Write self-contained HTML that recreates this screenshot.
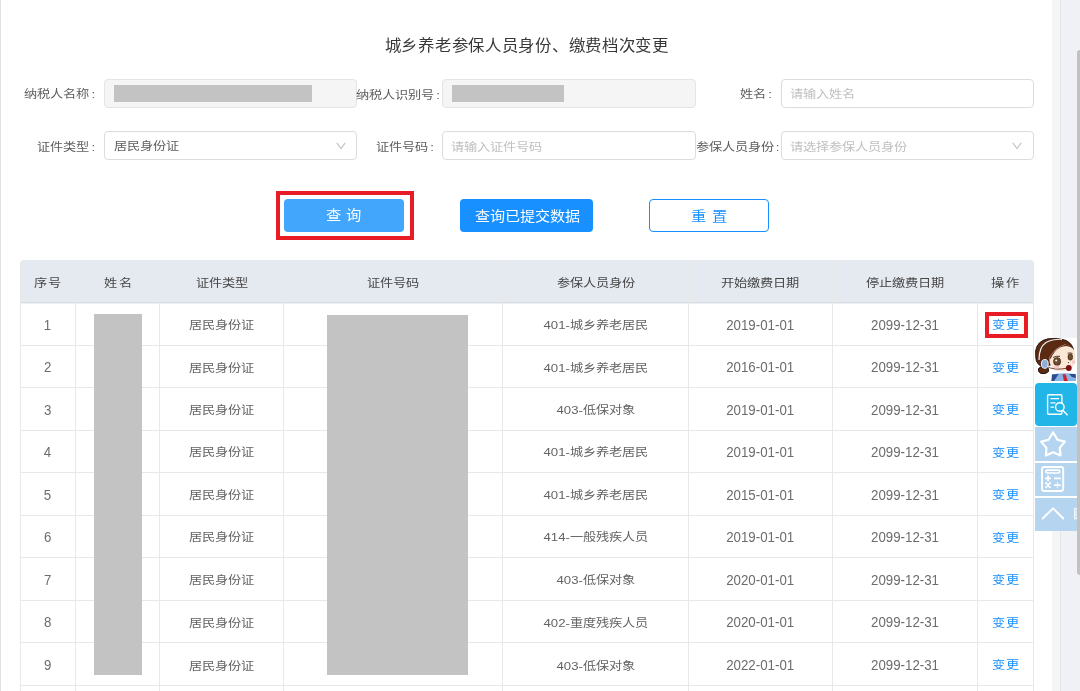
<!DOCTYPE html>
<html lang="zh-CN">
<head>
<meta charset="utf-8">
<style>
*{margin:0;padding:0;box-sizing:border-box;}
html,body{width:1080px;height:691px;overflow:hidden;background:#fff;}
body{position:relative;-webkit-font-smoothing:antialiased;will-change:transform;font-family:"Liberation Sans",sans-serif;font-size:13px;color:#606060;}
.abs{position:absolute;}
.t{position:absolute;white-space:nowrap;}
.co{margin-left:2px;}
.inp{height:29px;border:1px solid #dcdcdc;border-radius:4px;background:#fff;}
.inp.dis{background:#f5f5f5;border-color:#e4e4e4;}
.grey{background:#c3c3c3;}
.btn{height:33px;border-radius:4px;}
.redbox{border:4.5px solid #e81c24;}
.hline{height:1px;background:#e8e8e8;}
.vline{width:1px;background:#e8e8e8;}
</style>
</head>
<body>

<div class="abs" style="left:0;top:0;width:1px;height:691px;background:#dfe1e6;"></div>
<div class="abs" style="left:1052px;top:0;width:8px;height:691px;background:#f5f5f5;"></div>
<div class="abs" style="left:1060px;top:0;width:1px;height:691px;background:#e6e7eb;"></div>
<div class="abs" style="left:1061px;top:0;width:19px;height:691px;background:#f0f1f4;"></div>
<div class="abs" style="left:1077px;top:50px;width:6px;height:525px;background:#c1c1c1;border-radius:3px;"></div>
<div class="abs inp dis" style="left:104px;top:79px;width:253px;"></div>
<div class="abs grey" style="left:114px;top:85px;width:198px;height:17px;"></div>
<div class="abs inp dis" style="left:442px;top:79px;width:254px;"></div>
<div class="abs grey" style="left:452px;top:85px;width:112px;height:17px;"></div>
<div class="abs inp" style="left:781px;top:79px;width:253px;"></div>
<div class="abs inp" style="left:104px;top:131px;width:253px;"></div>
<div class="abs inp" style="left:442px;top:131px;width:254px;"></div>
<div class="abs inp" style="left:781px;top:131px;width:253px;"></div>
<svg class="abs" style="left:335.5px;top:142px;" width="10" height="8" viewBox="0 0 10 8"><path d="M0.8 0.8 L5 6.5 L9.2 0.8" fill="none" stroke="#c2c2c6" stroke-width="1.1"/></svg>
<svg class="abs" style="left:1012px;top:142px;" width="10" height="8" viewBox="0 0 10 8"><path d="M0.8 0.8 L5 6.5 L9.2 0.8" fill="none" stroke="#c2c2c6" stroke-width="1.1"/></svg>
<div class="abs redbox" style="left:276px;top:191.2px;width:137.6px;height:49.3px;border-width:4.6px;"></div>
<div class="abs btn" style="left:284px;top:199px;width:120px;background:#42a6fd;"></div>
<div class="abs btn" style="left:460px;top:199px;width:133px;background:#1890ff;"></div>
<div class="abs btn" style="left:649px;top:199px;width:120px;background:#fff;border:1px solid #1890ff;"></div>
<div class="abs" style="left:20px;top:260px;width:1014px;height:42px;background:#e5e9f0;border-radius:4px 4px 0 0;"></div>
<div class="abs hline" style="left:20px;top:302px;width:1014px;background:#d9dce2;"></div>
<div class="abs hline" style="left:20px;top:303px;width:1014px;background:#eef0f3;"></div>
<div class="abs hline" style="left:20px;top:345px;width:1014px;"></div>
<div class="abs hline" style="left:20px;top:387px;width:1014px;"></div>
<div class="abs hline" style="left:20px;top:430px;width:1014px;"></div>
<div class="abs hline" style="left:20px;top:472px;width:1014px;"></div>
<div class="abs hline" style="left:20px;top:515px;width:1014px;"></div>
<div class="abs hline" style="left:20px;top:557px;width:1014px;"></div>
<div class="abs hline" style="left:20px;top:600px;width:1014px;"></div>
<div class="abs hline" style="left:20px;top:642px;width:1014px;"></div>
<div class="abs hline" style="left:20px;top:685px;width:1014px;"></div>
<div class="abs vline" style="left:20px;top:263px;height:428px;"></div>
<div class="abs vline" style="left:75px;top:260px;height:431px;"></div>
<div class="abs vline" style="left:159px;top:260px;height:431px;"></div>
<div class="abs vline" style="left:283px;top:260px;height:431px;"></div>
<div class="abs vline" style="left:502px;top:260px;height:431px;"></div>
<div class="abs vline" style="left:688px;top:260px;height:431px;"></div>
<div class="abs vline" style="left:832px;top:260px;height:431px;"></div>
<div class="abs vline" style="left:977px;top:260px;height:431px;"></div>
<div class="abs vline" style="left:1033px;top:263px;height:428px;"></div>
<div class="abs grey" style="left:93.7px;top:313.7px;width:48.6px;height:361.3px;"></div>
<div class="abs grey" style="left:326.8px;top:315.2px;width:141.3px;height:359.8px;"></div>
<div class="abs redbox" style="left:985px;top:312px;width:43px;height:26px;border-width:4.3px;"></div>
<div class="t" id="title" style="left:326.81px;width:400px;text-align:center;top:34.57px;font-size:16.40px;line-height:21.32px;color:#383838;transform:scaleY(0.950);transform-origin:50% 10.66px;letter-spacing:0.72px;">城乡养老参保人员身份、缴费档次变更</div>
<div class="t" id="l1" style="left:-304.86px;width:400px;text-align:right;top:86.25px;font-size:13.20px;line-height:17.16px;color:#5e5e5e;transform:scaleY(0.880);transform-origin:50% 8.58px;">纳税人名称<span class="co">:</span></div>
<div class="t" id="l2" style="left:356.28px;text-align:left;top:86.50px;font-size:13.20px;line-height:17.16px;color:#5e5e5e;transform:scaleY(0.880);transform-origin:50% 8.58px;">纳税人识别号<span class="co">:</span></div>
<div class="t" id="l3" style="left:372.00px;width:400px;text-align:right;top:86.18px;font-size:13.20px;line-height:17.16px;color:#5e5e5e;transform:scaleY(0.880);transform-origin:50% 8.58px;">姓名<span class="co">:</span></div>
<div class="t" id="l4" style="left:-304.86px;width:400px;text-align:right;top:138.54px;font-size:13.20px;line-height:17.16px;color:#5e5e5e;transform:scaleY(0.880);transform-origin:50% 8.58px;">证件类型<span class="co">:</span></div>
<div class="t" id="l5" style="left:33.82px;width:400px;text-align:right;top:138.54px;font-size:13.20px;line-height:17.16px;color:#5e5e5e;transform:scaleY(0.880);transform-origin:50% 8.58px;">证件号码<span class="co">:</span></div>
<div class="t" id="l6" style="left:695.72px;text-align:left;top:138.54px;font-size:13.20px;line-height:17.16px;color:#5e5e5e;transform:scaleY(0.880);transform-origin:50% 8.58px;">参保人员身份<span class="co">:</span></div>
<div class="t" id="v1" style="left:114.00px;text-align:left;top:138.38px;font-size:13.20px;line-height:17.16px;color:#606060;transform:scaleY(0.880);transform-origin:50% 8.58px;">居民身份证</div>
<div class="t" id="p1" style="left:789.72px;text-align:left;top:86.37px;font-size:13.20px;line-height:17.16px;color:#c0c0c0;transform:scaleY(0.880);transform-origin:50% 8.58px;">请输入姓名</div>
<div class="t" id="p2" style="left:450.96px;text-align:left;top:138.71px;font-size:13.20px;line-height:17.16px;color:#c0c0c0;transform:scaleY(0.880);transform-origin:50% 8.58px;">请输入证件号码</div>
<div class="t" id="p3" style="left:789.72px;text-align:left;top:138.71px;font-size:13.20px;line-height:17.16px;color:#c0c0c0;transform:scaleY(0.880);transform-origin:50% 8.58px;">请选择参保人员身份</div>
<div class="t" id="b1" style="left:143.80px;width:400px;text-align:center;top:206.06px;font-size:15.30px;line-height:19.89px;color:#fff;transform:scaleY(0.880);transform-origin:50% 9.95px;font-weight:500;">查<span style="margin-left:5.3px"></span>询</div>
<div class="t" id="b2" style="left:327.05px;width:400px;text-align:center;top:206.68px;font-size:15.10px;line-height:19.63px;color:#fff;transform:scaleY(0.880);transform-origin:50% 9.81px;font-weight:500;">查询已提交数据</div>
<div class="t" id="b3" style="left:508.74px;width:400px;text-align:center;top:206.88px;font-size:15.30px;line-height:19.89px;color:#1890ff;transform:scaleY(0.880);transform-origin:50% 9.95px;font-weight:500;">重<span style="margin-left:5.8px"></span>置</div>
<div class="t" id="h0" style="left:-151.53px;width:400px;text-align:center;top:274.78px;font-size:13.20px;line-height:17.16px;color:#474747;transform:scaleY(0.880);transform-origin:50% 8.58px;letter-spacing:1.4px;">序号</div>
<div class="t" id="h1" style="left:-81.46px;width:400px;text-align:center;top:274.78px;font-size:13.20px;line-height:17.16px;color:#474747;transform:scaleY(0.880);transform-origin:50% 8.58px;letter-spacing:1.4px;">姓名</div>
<div class="t" id="h2" style="left:21.66px;width:400px;text-align:center;top:274.78px;font-size:13.20px;line-height:17.16px;color:#474747;transform:scaleY(0.880);transform-origin:50% 8.58px;">证件类型</div>
<div class="t" id="h3" style="left:193.38px;width:400px;text-align:center;top:274.78px;font-size:13.20px;line-height:17.16px;color:#474747;transform:scaleY(0.880);transform-origin:50% 8.58px;">证件号码</div>
<div class="t" id="h4" style="left:395.55px;width:400px;text-align:center;top:274.78px;font-size:13.20px;line-height:17.16px;color:#474747;transform:scaleY(0.880);transform-origin:50% 8.58px;">参保人员身份</div>
<div class="t" id="h5" style="left:560.00px;width:400px;text-align:center;top:274.78px;font-size:13.20px;line-height:17.16px;color:#474747;transform:scaleY(0.880);transform-origin:50% 8.58px;">开始缴费日期</div>
<div class="t" id="h6" style="left:705.00px;width:400px;text-align:center;top:274.78px;font-size:13.20px;line-height:17.16px;color:#474747;transform:scaleY(0.880);transform-origin:50% 8.58px;">停止缴费日期</div>
<div class="t" id="h7" style="left:805.80px;width:400px;text-align:center;top:274.78px;font-size:13.20px;line-height:17.16px;color:#474747;transform:scaleY(0.880);transform-origin:50% 8.58px;letter-spacing:1.4px;">操作</div>
<div class="t" id="r0c0" style="left:-152.50px;width:400px;text-align:center;top:316.95px;font-size:13.30px;line-height:17.29px;color:#6c6c6c;transform:scaleY(1.050);transform-origin:50% 8.65px;">1</div>
<div class="t" id="r0c2" style="left:21.94px;width:400px;text-align:center;top:316.82px;font-size:13.20px;line-height:17.16px;color:#646464;transform:scaleY(0.880);transform-origin:50% 8.58px;">居民身份证</div>
<div class="t" id="r0c4" style="left:395.68px;width:400px;text-align:center;top:316.82px;font-size:13.20px;line-height:17.16px;color:#646464;transform:scaleY(0.880);transform-origin:50% 8.58px;">401-城乡养老居民</div>
<div class="t" id="r0c5" style="left:560.20px;width:400px;text-align:center;top:316.95px;font-size:13.30px;line-height:17.29px;color:#6c6c6c;transform:scaleY(1.050);transform-origin:50% 8.65px;">2019-01-01</div>
<div class="t" id="r0c6" style="left:705.00px;width:400px;text-align:center;top:316.95px;font-size:13.30px;line-height:17.29px;color:#6c6c6c;transform:scaleY(1.050);transform-origin:50% 8.65px;">2099-12-31</div>
<div class="t" id="r0c7" style="left:806.03px;width:400px;text-align:center;top:317.10px;font-size:13.20px;line-height:17.16px;color:#1890ff;transform:scaleY(0.880);transform-origin:50% 8.58px;letter-spacing:1.2px;">变更</div>
<div class="t" id="r1c0" style="left:-152.40px;width:400px;text-align:center;top:359.45px;font-size:13.30px;line-height:17.29px;color:#6c6c6c;transform:scaleY(1.050);transform-origin:50% 8.65px;">2</div>
<div class="t" id="r1c2" style="left:21.94px;width:400px;text-align:center;top:359.63px;font-size:13.20px;line-height:17.16px;color:#646464;transform:scaleY(0.880);transform-origin:50% 8.58px;">居民身份证</div>
<div class="t" id="r1c4" style="left:395.68px;width:400px;text-align:center;top:359.63px;font-size:13.20px;line-height:17.16px;color:#646464;transform:scaleY(0.880);transform-origin:50% 8.58px;">401-城乡养老居民</div>
<div class="t" id="r1c5" style="left:560.20px;width:400px;text-align:center;top:359.45px;font-size:13.30px;line-height:17.29px;color:#6c6c6c;transform:scaleY(1.050);transform-origin:50% 8.65px;">2016-01-01</div>
<div class="t" id="r1c6" style="left:705.00px;width:400px;text-align:center;top:359.45px;font-size:13.30px;line-height:17.29px;color:#6c6c6c;transform:scaleY(1.050);transform-origin:50% 8.65px;">2099-12-31</div>
<div class="t" id="r1c7" style="left:806.03px;width:400px;text-align:center;top:359.95px;font-size:13.20px;line-height:17.16px;color:#1890ff;transform:scaleY(0.880);transform-origin:50% 8.58px;letter-spacing:1.2px;">变更</div>
<div class="t" id="r2c0" style="left:-152.40px;width:400px;text-align:center;top:401.77px;font-size:13.30px;line-height:17.29px;color:#6c6c6c;transform:scaleY(1.050);transform-origin:50% 8.65px;">3</div>
<div class="t" id="r2c2" style="left:21.94px;width:400px;text-align:center;top:402.16px;font-size:13.20px;line-height:17.16px;color:#646464;transform:scaleY(0.880);transform-origin:50% 8.58px;">居民身份证</div>
<div class="t" id="r2c4" style="left:395.68px;width:400px;text-align:center;top:402.16px;font-size:13.20px;line-height:17.16px;color:#646464;transform:scaleY(0.880);transform-origin:50% 8.58px;">403-低保对象</div>
<div class="t" id="r2c5" style="left:560.20px;width:400px;text-align:center;top:401.77px;font-size:13.30px;line-height:17.29px;color:#6c6c6c;transform:scaleY(1.050);transform-origin:50% 8.65px;">2019-01-01</div>
<div class="t" id="r2c6" style="left:705.00px;width:400px;text-align:center;top:401.77px;font-size:13.30px;line-height:17.29px;color:#6c6c6c;transform:scaleY(1.050);transform-origin:50% 8.65px;">2099-12-31</div>
<div class="t" id="r2c7" style="left:806.03px;width:400px;text-align:center;top:401.94px;font-size:13.20px;line-height:17.16px;color:#1890ff;transform:scaleY(0.880);transform-origin:50% 8.58px;letter-spacing:1.2px;">变更</div>
<div class="t" id="r3c0" style="left:-152.50px;width:400px;text-align:center;top:444.25px;font-size:13.30px;line-height:17.29px;color:#6c6c6c;transform:scaleY(1.050);transform-origin:50% 8.65px;">4</div>
<div class="t" id="r3c2" style="left:21.94px;width:400px;text-align:center;top:444.41px;font-size:13.20px;line-height:17.16px;color:#646464;transform:scaleY(0.880);transform-origin:50% 8.58px;">居民身份证</div>
<div class="t" id="r3c4" style="left:395.68px;width:400px;text-align:center;top:444.41px;font-size:13.20px;line-height:17.16px;color:#646464;transform:scaleY(0.880);transform-origin:50% 8.58px;">401-城乡养老居民</div>
<div class="t" id="r3c5" style="left:560.20px;width:400px;text-align:center;top:444.25px;font-size:13.30px;line-height:17.29px;color:#6c6c6c;transform:scaleY(1.050);transform-origin:50% 8.65px;">2019-01-01</div>
<div class="t" id="r3c6" style="left:705.00px;width:400px;text-align:center;top:444.25px;font-size:13.30px;line-height:17.29px;color:#6c6c6c;transform:scaleY(1.050);transform-origin:50% 8.65px;">2099-12-31</div>
<div class="t" id="r3c7" style="left:806.03px;width:400px;text-align:center;top:444.73px;font-size:13.20px;line-height:17.16px;color:#1890ff;transform:scaleY(0.880);transform-origin:50% 8.58px;letter-spacing:1.2px;">变更</div>
<div class="t" id="r4c0" style="left:-152.60px;width:400px;text-align:center;top:486.59px;font-size:13.30px;line-height:17.29px;color:#6c6c6c;transform:scaleY(1.050);transform-origin:50% 8.65px;">5</div>
<div class="t" id="r4c2" style="left:21.94px;width:400px;text-align:center;top:487.24px;font-size:13.20px;line-height:17.16px;color:#646464;transform:scaleY(0.880);transform-origin:50% 8.58px;">居民身份证</div>
<div class="t" id="r4c4" style="left:395.68px;width:400px;text-align:center;top:487.24px;font-size:13.20px;line-height:17.16px;color:#646464;transform:scaleY(0.880);transform-origin:50% 8.58px;">401-城乡养老居民</div>
<div class="t" id="r4c5" style="left:560.20px;width:400px;text-align:center;top:486.59px;font-size:13.30px;line-height:17.29px;color:#6c6c6c;transform:scaleY(1.050);transform-origin:50% 8.65px;">2015-01-01</div>
<div class="t" id="r4c6" style="left:705.00px;width:400px;text-align:center;top:486.59px;font-size:13.30px;line-height:17.29px;color:#6c6c6c;transform:scaleY(1.050);transform-origin:50% 8.65px;">2099-12-31</div>
<div class="t" id="r4c7" style="left:806.03px;width:400px;text-align:center;top:487.02px;font-size:13.20px;line-height:17.16px;color:#1890ff;transform:scaleY(0.880);transform-origin:50% 8.58px;letter-spacing:1.2px;">变更</div>
<div class="t" id="r5c0" style="left:-152.40px;width:400px;text-align:center;top:529.43px;font-size:13.30px;line-height:17.29px;color:#6c6c6c;transform:scaleY(1.050);transform-origin:50% 8.65px;">6</div>
<div class="t" id="r5c2" style="left:21.94px;width:400px;text-align:center;top:529.46px;font-size:13.20px;line-height:17.16px;color:#646464;transform:scaleY(0.880);transform-origin:50% 8.58px;">居民身份证</div>
<div class="t" id="r5c4" style="left:395.68px;width:400px;text-align:center;top:529.46px;font-size:13.20px;line-height:17.16px;color:#646464;transform:scaleY(0.880);transform-origin:50% 8.58px;">414-一般残疾人员</div>
<div class="t" id="r5c5" style="left:560.20px;width:400px;text-align:center;top:529.43px;font-size:13.30px;line-height:17.29px;color:#6c6c6c;transform:scaleY(1.050);transform-origin:50% 8.65px;">2019-01-01</div>
<div class="t" id="r5c6" style="left:705.00px;width:400px;text-align:center;top:529.43px;font-size:13.30px;line-height:17.29px;color:#6c6c6c;transform:scaleY(1.050);transform-origin:50% 8.65px;">2099-12-31</div>
<div class="t" id="r5c7" style="left:806.03px;width:400px;text-align:center;top:529.57px;font-size:13.20px;line-height:17.16px;color:#1890ff;transform:scaleY(0.880);transform-origin:50% 8.58px;letter-spacing:1.2px;">变更</div>
<div class="t" id="r6c0" style="left:-152.40px;width:400px;text-align:center;top:572.41px;font-size:13.30px;line-height:17.29px;color:#6c6c6c;transform:scaleY(1.050);transform-origin:50% 8.65px;">7</div>
<div class="t" id="r6c2" style="left:21.94px;width:400px;text-align:center;top:571.76px;font-size:13.20px;line-height:17.16px;color:#646464;transform:scaleY(0.880);transform-origin:50% 8.58px;">居民身份证</div>
<div class="t" id="r6c4" style="left:395.68px;width:400px;text-align:center;top:571.76px;font-size:13.20px;line-height:17.16px;color:#646464;transform:scaleY(0.880);transform-origin:50% 8.58px;">403-低保对象</div>
<div class="t" id="r6c5" style="left:560.20px;width:400px;text-align:center;top:572.41px;font-size:13.30px;line-height:17.29px;color:#6c6c6c;transform:scaleY(1.050);transform-origin:50% 8.65px;">2020-01-01</div>
<div class="t" id="r6c6" style="left:705.00px;width:400px;text-align:center;top:572.41px;font-size:13.30px;line-height:17.29px;color:#6c6c6c;transform:scaleY(1.050);transform-origin:50% 8.65px;">2099-12-31</div>
<div class="t" id="r6c7" style="left:806.03px;width:400px;text-align:center;top:572.34px;font-size:13.20px;line-height:17.16px;color:#1890ff;transform:scaleY(0.880);transform-origin:50% 8.58px;letter-spacing:1.2px;">变更</div>
<div class="t" id="r7c0" style="left:-152.40px;width:400px;text-align:center;top:614.39px;font-size:13.30px;line-height:17.29px;color:#6c6c6c;transform:scaleY(1.050);transform-origin:50% 8.65px;">8</div>
<div class="t" id="r7c2" style="left:21.94px;width:400px;text-align:center;top:615.05px;font-size:13.20px;line-height:17.16px;color:#646464;transform:scaleY(0.880);transform-origin:50% 8.58px;">居民身份证</div>
<div class="t" id="r7c4" style="left:395.68px;width:400px;text-align:center;top:615.05px;font-size:13.20px;line-height:17.16px;color:#646464;transform:scaleY(0.880);transform-origin:50% 8.58px;">402-重度残疾人员</div>
<div class="t" id="r7c5" style="left:560.20px;width:400px;text-align:center;top:614.39px;font-size:13.30px;line-height:17.29px;color:#6c6c6c;transform:scaleY(1.050);transform-origin:50% 8.65px;">2020-01-01</div>
<div class="t" id="r7c6" style="left:705.00px;width:400px;text-align:center;top:614.39px;font-size:13.30px;line-height:17.29px;color:#6c6c6c;transform:scaleY(1.050);transform-origin:50% 8.65px;">2099-12-31</div>
<div class="t" id="r7c7" style="left:806.03px;width:400px;text-align:center;top:614.87px;font-size:13.20px;line-height:17.16px;color:#1890ff;transform:scaleY(0.880);transform-origin:50% 8.58px;letter-spacing:1.2px;">变更</div>
<div class="t" id="r8c0" style="left:-152.40px;width:400px;text-align:center;top:657.23px;font-size:13.30px;line-height:17.29px;color:#6c6c6c;transform:scaleY(1.050);transform-origin:50% 8.65px;">9</div>
<div class="t" id="r8c2" style="left:21.94px;width:400px;text-align:center;top:657.58px;font-size:13.20px;line-height:17.16px;color:#646464;transform:scaleY(0.880);transform-origin:50% 8.58px;">居民身份证</div>
<div class="t" id="r8c4" style="left:395.68px;width:400px;text-align:center;top:657.58px;font-size:13.20px;line-height:17.16px;color:#646464;transform:scaleY(0.880);transform-origin:50% 8.58px;">403-低保对象</div>
<div class="t" id="r8c5" style="left:560.20px;width:400px;text-align:center;top:657.23px;font-size:13.30px;line-height:17.29px;color:#6c6c6c;transform:scaleY(1.050);transform-origin:50% 8.65px;">2022-01-01</div>
<div class="t" id="r8c6" style="left:705.00px;width:400px;text-align:center;top:657.23px;font-size:13.30px;line-height:17.29px;color:#6c6c6c;transform:scaleY(1.050);transform-origin:50% 8.65px;">2099-12-31</div>
<div class="t" id="r8c7" style="left:806.03px;width:400px;text-align:center;top:657.36px;font-size:13.20px;line-height:17.16px;color:#1890ff;transform:scaleY(0.880);transform-origin:50% 8.58px;letter-spacing:1.2px;">变更</div>
<!-- floating widget -->
<div class="abs" style="left:1034px;top:338px;width:43px;height:193px;background:#fff;"></div>
<svg class="abs" style="left:1034px;top:338px;" width="43" height="44" viewBox="0 0 43 44">
  <path d="M1.6 13 Q3 3 14 0.8 Q24 -0.6 32 2.4 Q39 6 39.6 13 L39 17 Q32 28 16.5 27 Q10 28 7.5 28.5 Q2.5 26 1.8 20 Z" fill="#5a2a12" stroke="#1e0c04" stroke-width="0.9"/>
  <path d="M4.5 30.5 Q7 27.5 12 28.5 Q15.5 30 14.5 33.5 Q12 36.5 7 35.5 Q3.5 34 4.5 30.5 Z" fill="#5a2a12" stroke="#1e0c04" stroke-width="0.9"/>
  <path d="M15.5 19 Q22 9 31 6.6 Q38 8 40.5 13 Q42 18 41.5 22 Q41 29 35 32 Q28 34 21 32.5 Q16.5 29 15.6 24 Z" fill="#fbe7d6"/>
  <path d="M15.5 19.5 Q22 9.5 31 6.8 Q37 7.5 39.5 10.5 Q33 6 26 9.5 Q20 13 16.5 21 Z" fill="#5a2a12"/>
  <path d="M5 22 Q5 9 12 4.5 Q19 0.8 28 1.3" fill="none" stroke="#eef0f6" stroke-width="1.2"/>
  <path d="M12 28 Q20 33 34 30" fill="none" stroke="#4a1a10" stroke-width="0.8"/>
  <ellipse cx="10.8" cy="25.9" rx="3.4" ry="4.4" fill="#8eaed8" stroke="#f4f6fa" stroke-width="1"/>
  <path d="M19 19.5 Q22 17.8 26 18.3" fill="none" stroke="#3a2010" stroke-width="0.9"/>
  <path d="M33.5 15.3 Q36 14.3 38.5 15.5" fill="none" stroke="#3a2010" stroke-width="0.8"/>
  <ellipse cx="23.1" cy="23.5" rx="3.6" ry="3.9" fill="#6e4e2e" stroke="#2a1a0e" stroke-width="0.6"/>
  <circle cx="22.2" cy="22.4" r="1" fill="#fff"/>
  <ellipse cx="36.3" cy="19" rx="2.4" ry="3.2" fill="#6e4e2e" stroke="#2a1a0e" stroke-width="0.5"/>
  <ellipse cx="22.5" cy="29" rx="2.8" ry="1.5" fill="#f5c6c6"/>
  <ellipse cx="39.6" cy="24" rx="1.8" ry="1.8" fill="#f5c6c6"/>
  <circle cx="34.4" cy="24.6" r="0.6" fill="#3a2010"/>
  <circle cx="34.8" cy="30" r="2.9" fill="#7a0e10"/>
  <path d="M17.5 43 L18 36.5 Q29 34.5 41.5 36 L42 43 Z" fill="#86b2e4"/>
  <path d="M18 36.5 L24.5 36 L22 40 L20 43 L17.5 43 Z" fill="#2c4c8c"/>
  <path d="M35 36 L41.5 36 L42 40 L38 39 Z" fill="#2c4c8c"/>
  <path d="M28.5 36.5 L31.5 36.3 L33.8 43 L30 43 Z" fill="#d4202a"/>
</svg>
<div class="abs" style="left:1035px;top:383px;width:42px;height:42.5px;background:#22b5e8;border-radius:4px;"></div>
<svg class="abs" style="left:1035px;top:383px;" width="42" height="43" viewBox="0 0 42 43">
  <rect x="12.6" y="11.8" width="14.3" height="19.4" rx="1" fill="none" stroke="#fff" stroke-width="1.4"/>
  <path d="M15.5 15.7 H24 M15.5 19.9 H20.5 M15.5 24.2 H19" stroke="#fff" stroke-width="1.3" fill="none"/>
  <circle cx="24.8" cy="24" r="4.3" fill="#22b5e8" stroke="#fff" stroke-width="1.4"/>
  <path d="M27.8 27.2 L32.6 32.2" stroke="#fff" stroke-width="1.4" fill="none"/>
</svg>
<div class="abs" style="left:1035px;top:427px;width:42px;height:34px;background:#b4d4f0;"></div>
<svg class="abs" style="left:1035px;top:427px;" width="42" height="34" viewBox="0 0 42 34">
  <path d="M18.1 5.2 L22.4 12.7 L29.9 14.6 L24.7 20.9 L25.6 28.5 L18.1 25.3 L10.9 28.5 L11.4 20.9 L6.2 14.6 L13.6 12.7 Z" fill="none" stroke="#fff" stroke-width="2.2" stroke-linejoin="round"/>
</svg>
<div class="abs" style="left:1035px;top:463px;width:42px;height:33px;background:#b4d4f0;"></div>
<svg class="abs" style="left:1035px;top:463px;" width="42" height="33" viewBox="0 0 42 33">
  <rect x="7" y="4" width="21.2" height="24" rx="2.2" fill="none" stroke="#fff" stroke-width="1.9"/>
  <rect x="10.9" y="7.1" width="13.9" height="2.9" rx="1.45" fill="none" stroke="#fff" stroke-width="1.7"/>
  <path d="M10 15.3 H16 M13 12.4 V18.2 M19 15.3 H25.7 M10.3 19.4 L15.7 25 M15.7 19.4 L10.3 25 M19 22.2 H25.7" stroke="#fff" stroke-width="1.8" fill="none"/>
  <path d="M22.4 19.2 V25.2" stroke="#fff" stroke-width="0.9" fill="none"/>
</svg>
<div class="abs" style="left:1035px;top:498px;width:42px;height:33px;background:#b4d4f0;"></div>
<svg class="abs" style="left:1035px;top:498px;" width="42" height="33" viewBox="0 0 42 33">
  <path d="M7.1 21 L18.1 10.4 L28.8 21" fill="none" stroke="#fff" stroke-width="1.9"/>
  <path d="M39.6 10.6 H42 V20.6 H39.6 Z" fill="none" stroke="#f4f8fc" stroke-width="1.2"/>
  <path d="M40.6 13 V18.5" stroke="#e4eef8" stroke-width="0.8"/>
</svg>

</body></html>
